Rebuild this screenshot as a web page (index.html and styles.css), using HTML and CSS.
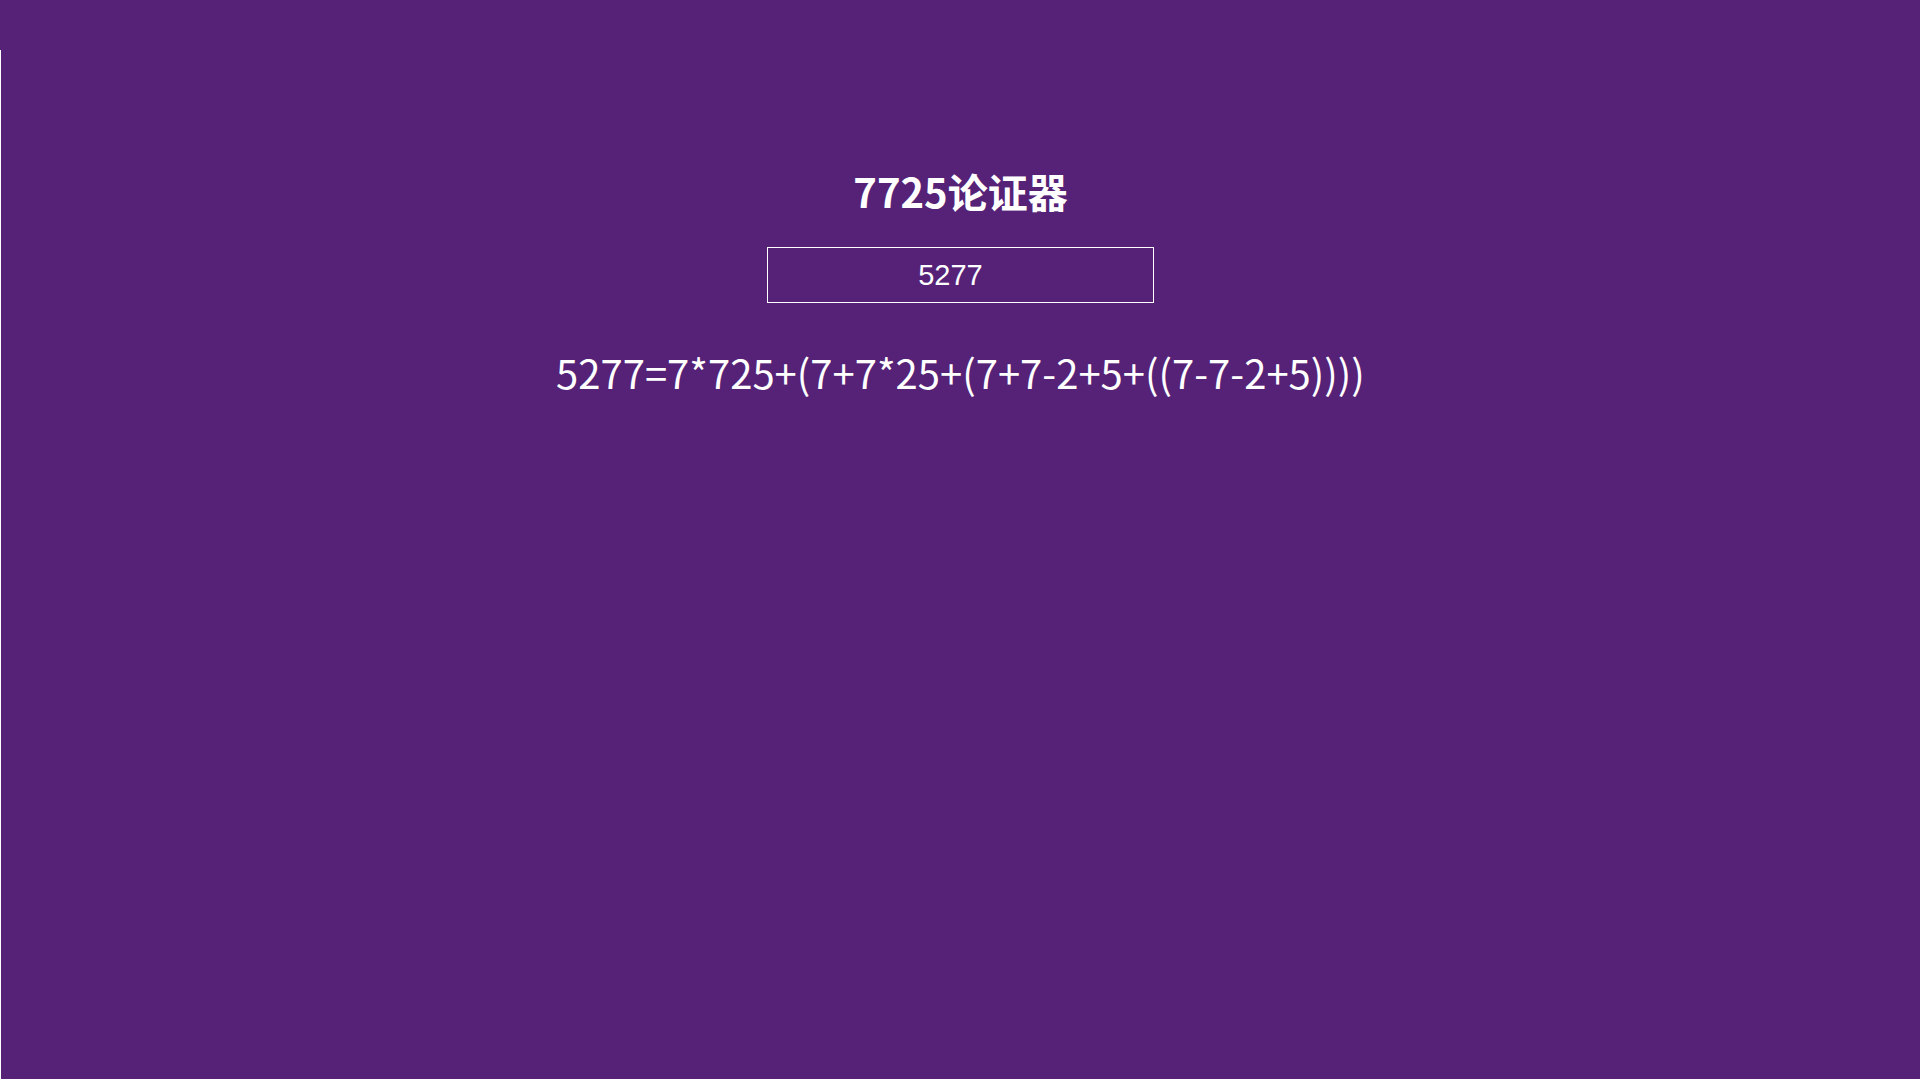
FILE: index.html
```html
<!DOCTYPE html>
<html lang="zh">
<head>
<meta charset="utf-8">
<title>7725论证器</title>
<link rel="stylesheet" href="styles.css">
</head>
<body>
<div class="topbar"></div>
<main class="main">
  <h1 class="title">7725论证器</h1>
  <input class="num-input" type="text" value="5277">
  <div class="result">5277=7*725+(7+7*25+(7+7-2+5+((7-7-2+5))))</div>
</main>
</body>
</html>
```
FILE: styles.css
```css
html, body {
  margin: 0;
  padding: 0;
  height: 100%;
  background: #552277;
}
body {
  display: flex;
  flex-direction: column;
  font-family: "Noto Sans CJK SC", "Noto Sans", sans-serif;
  color: #fff;
}
.topbar {
  height: 50px;
  flex: none;
}
.main {
  flex: 1;
  border-left: 1px solid #fff;
  display: flex;
  flex-direction: column;
  align-items: center;
  padding-top: 111px;
}
.title {
  margin: 0;
  font-size: 40px;
  font-weight: 700;
  line-height: 60px;
}
.num-input {
  margin-top: 26px;
  width: 387px;
  height: 56px;
  box-sizing: border-box;
  border: 1px solid #fff;
  background: transparent;
  color: #fff;
  font-family: "Liberation Sans", Arial, sans-serif;
  font-size: 29px;
  text-align: center;
  padding: 0 20px 0 0;
  outline: none;
}
.result {
  margin-top: 44px;
  font-size: 40px;
  line-height: 50px;
}
```
